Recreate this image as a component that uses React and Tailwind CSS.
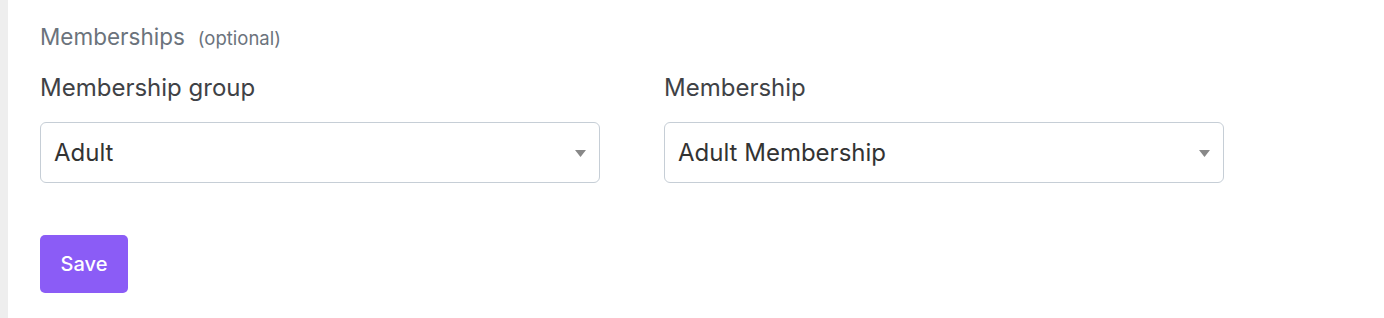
import React from 'react';

const Caret = () => (
  <svg width="11" height="7" viewBox="0 0 11 7" className="absolute right-[13px] top-[27px]">
    <path d="M0 0 L11 0 L5.5 7 Z" fill="#888888" />
  </svg>
);

const SelectBox = ({ label, value }) => (
  <div className="w-[560px]">
    <div className="text-[24px] leading-[30px] text-[#3f4246] mb-[19px]">{label}</div>
    <div className="relative h-[61px] rounded-[6px] border border-[#c6ced6] bg-white flex items-center pl-[13px]">
      <span className="text-[24px] text-[#333333]">{value}</span>
      <Caret />
    </div>
  </div>
);

export default function App() {
  return (
    <div className="flex h-[318px] bg-white" style={{ fontFamily: 'Inter, "Noto Sans", sans-serif' }}>
      <div className="w-[8px] bg-[#eeeeee] shrink-0" />
      <div className="pl-[32px] pt-[23px]">
        <div className="flex items-baseline gap-[13px] text-[#6b737c] h-[28px]">
          <span className="text-[22.5px] leading-[28px]">Memberships</span>
          <span className="text-[18.5px]">(optional)</span>
        </div>
        <div className="flex gap-[64px] mt-[22px]">
          <SelectBox label="Membership group" value="Adult" />
          <SelectBox label="Membership" value="Adult Membership" />
        </div>
        <button className="mt-[52px] w-[88px] h-[58px] rounded-[5px] bg-[#8b5cf6] text-white text-[20px] font-medium">
          Save
        </button>
      </div>
    </div>
  );
}
